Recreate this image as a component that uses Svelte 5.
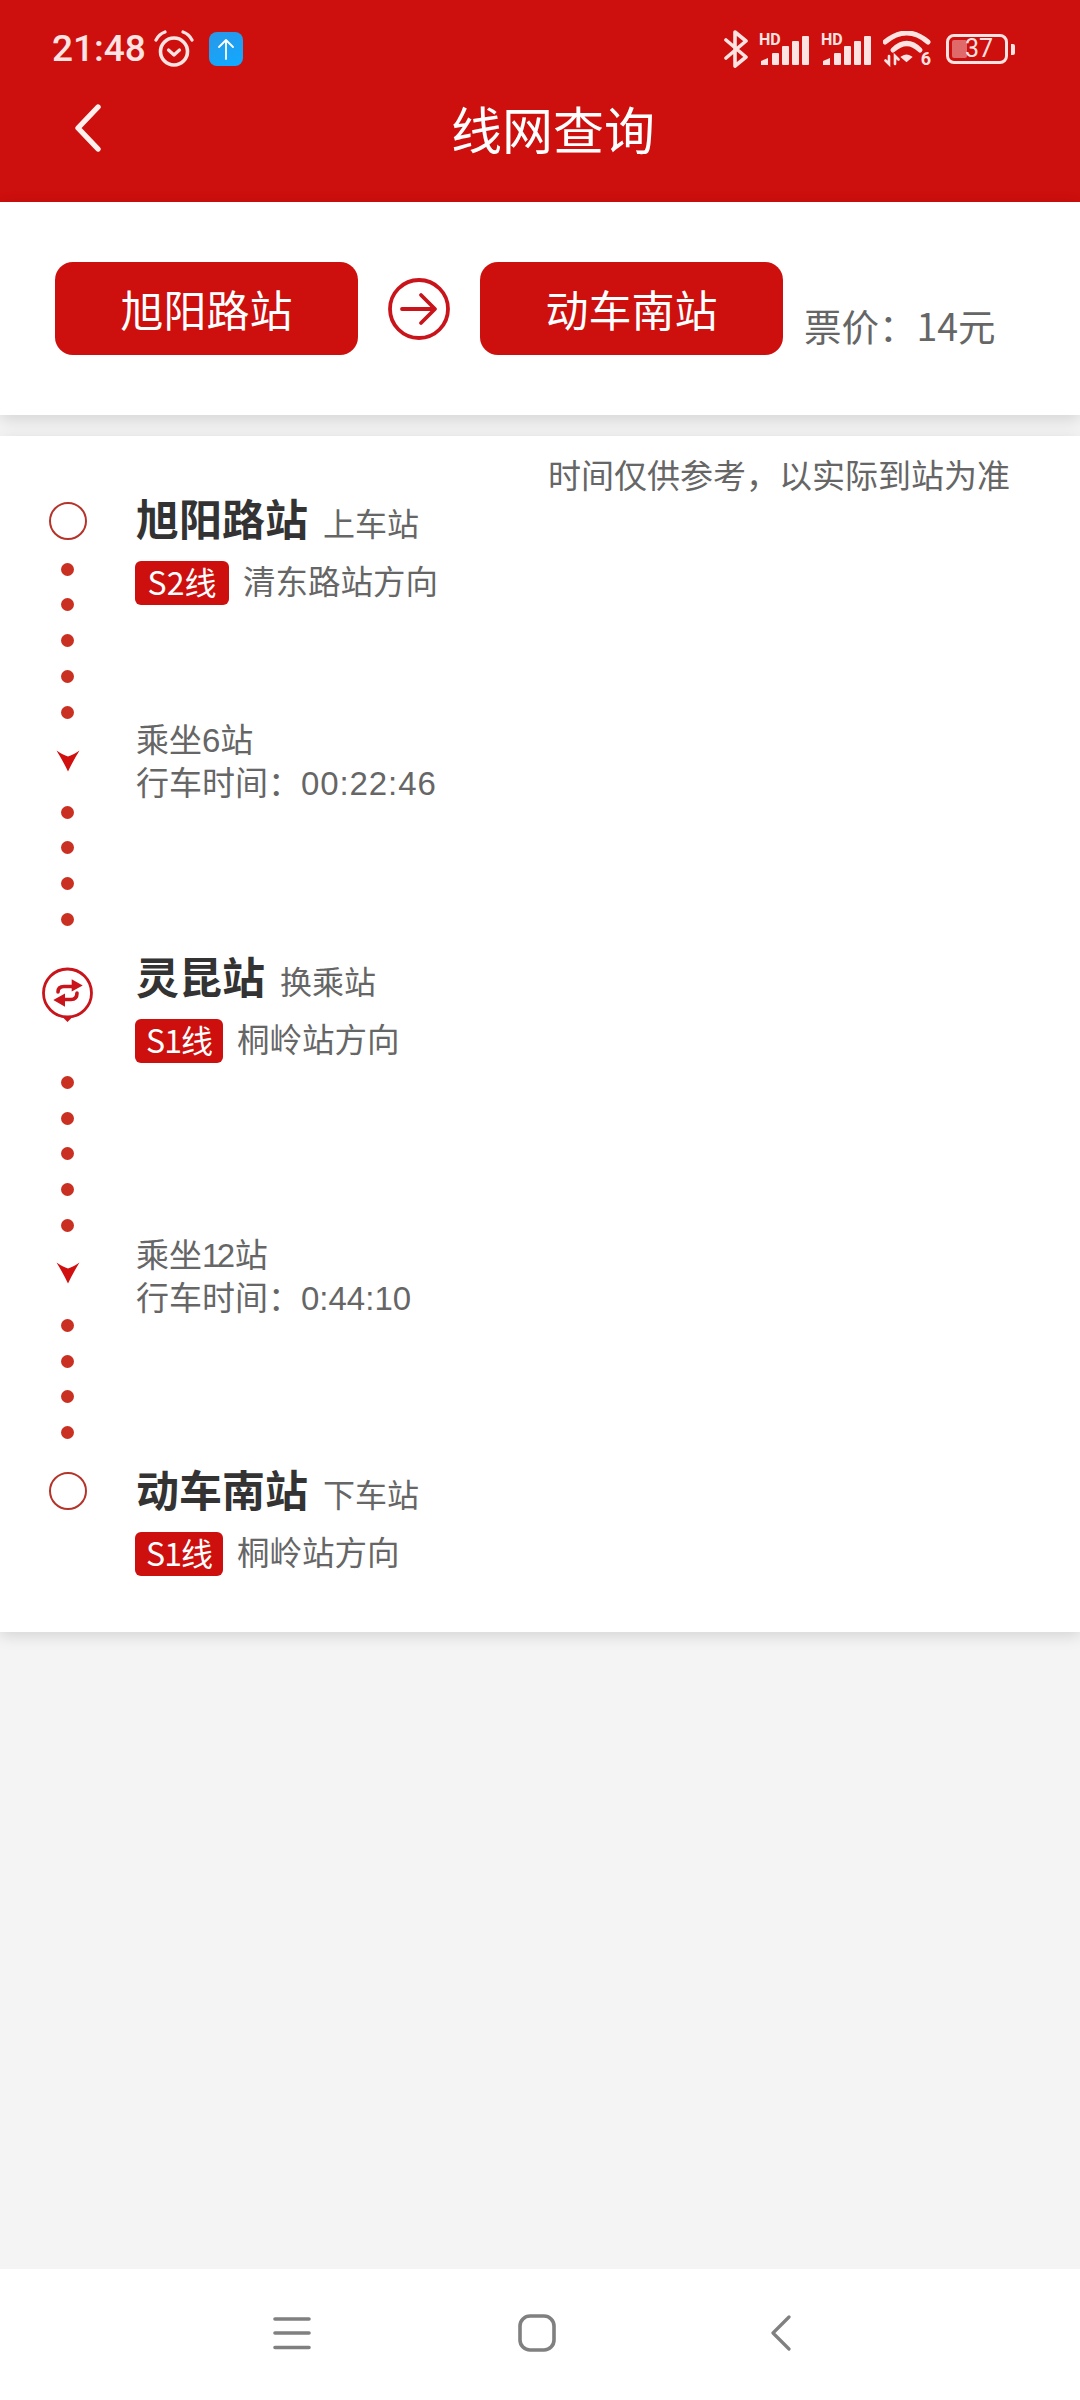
<script>
	const dots = (n) => Array.from({ length: n })
</script>

{#snippet dotGroup(n, cls)}
	<div class="dots {cls}">
		{#each dots(n) as _}
			<span class="dot"></span>
		{/each}
	</div>
{/snippet}

{#snippet chevron(cls)}
	<svg class="chev {cls}" width="24" height="22" viewBox="0 0 24 22">
		<path d="M0.5 0.5 Q7 5 12 6.5 Q17 5 23.5 0.5 Q17 11 12 21.5 Q7 11 0.5 0.5 Z" fill="#d0100f" />
	</svg>
{/snippet}

{#snippet ring(cls)}
	<span class="ring {cls}"></span>
{/snippet}

<div class="page">
	<header class="top">
		<div class="status">
			<div class="status-left">
				<span class="time">21:48</span>
				<svg class="alarm" width="40" height="38" viewBox="0 0 40 38" fill="none" stroke="#fde3e1" stroke-linecap="round" stroke-linejoin="round">
					<circle cx="20" cy="21.5" r="13.5" stroke-width="3.6" />
					<path d="M14.5 20 L20 25 L25.5 20" stroke-width="3.2" />
					<path d="M2 10 Q5 4 11 2" stroke-width="3.2" />
					<path d="M38 10 Q35 4 29 2" stroke-width="3.2" />
				</svg>
				<span class="upload">
					<svg width="20" height="24" viewBox="0 0 20 24" fill="none" stroke="#fff" stroke-width="1.8" stroke-linecap="round" stroke-linejoin="round">
						<path d="M10 22 V3 M3 10 L10 3 L17 10" />
					</svg>
				</span>
			</div>
			<div class="status-right">
				<svg class="bt" width="24" height="38" viewBox="0 0 24 38" fill="none" stroke="#fde3e1" stroke-width="3.6" stroke-linecap="round" stroke-linejoin="round">
					<path d="M2 10 L22 27 L11 36 V2 L22 11 L2 28" />
				</svg>
				{#each [0, 1] as i}
					<span class="signal">
						<span class="hd">HD</span>
						<svg width="50" height="29" viewBox="0 0 50 29" fill="#fde3e1">
							<path d="M2 29 V25 L9 22 V29 Z" />
							<rect x="13" y="17" width="7" height="12" rx="1" />
							<rect x="23" y="10" width="7" height="19" rx="1" />
							<rect x="33" y="5" width="7" height="24" rx="1" />
							<rect x="43" y="0" width="7" height="29" rx="1" />
						</svg>
					</span>
				{/each}
				<span class="wifi">
					<svg width="48" height="36" viewBox="0 0 48 36" fill="none" stroke="#fde3e1" stroke-linecap="round">
						<path d="M2 11 Q24 -7 45 11" stroke-width="5" />
						<path d="M10 19 Q24 6 37 19" stroke-width="5" />
						<path d="M19 26 Q23.5 23 28 26 L23.5 30 Z" fill="#fde3e1" stroke-width="2" />
						<path d="M6 25 V33 L2.5 29.5 M12 33 V25 L15.5 28.5" stroke-width="2.6" />
					</svg>
					<span class="wifi-six">6</span>
				</span>
				<span class="battery">
					<span class="battery-body">
						<span class="battery-fill"></span>
						<span class="battery-num">37</span>
					</span>
					<span class="battery-nub"></span>
				</span>
			</div>
		</div>
		<div class="titlebar">
			<svg class="back" width="26" height="48" viewBox="0 0 26 48" fill="none" stroke="#fff0ee" stroke-width="5.4" stroke-linecap="round" stroke-linejoin="round">
				<path d="M23 3 L3 24 L23 45" />
			</svg>
			<h1>线网查询</h1>
		</div>
	</header>

	<section class="route">
		<button class="station-btn">旭阳路站</button>
		<svg class="go" width="62" height="62" viewBox="0 0 62 62" fill="none" stroke="#c8141a" stroke-linecap="round" stroke-linejoin="round">
			<circle cx="31" cy="31" r="29" stroke-width="3.8" />
			<path d="M14 31 H46 M33 17 L47 31 L33 45" stroke-width="3.8" />
		</svg>
		<button class="station-btn">动车南站</button>
		<span class="fare">票价：14元</span>
	</section>

	<section class="list">
		<p class="note">时间仅供参考，以实际到站为准</p>
		<div class="timeline">
			<div class="rail">
				{@render ring('r-a')}
				{@render dotGroup(5, 'd-a')}
				{@render chevron('c-a')}
				{@render dotGroup(4, 'd-b')}
				<svg class="transfer" width="52" height="55" viewBox="0 0 52 55" fill="none" stroke-linecap="round">
					<circle cx="25.5" cy="26" r="24" stroke="#c8141a" stroke-width="2.8" />
					<path d="M20.5 50 H30.5 L25.5 55 Z" fill="#c8141a" />
					<path d="M16 25 Q16 19.5 22 19.5 H31" stroke="#c8141a" stroke-width="3.6" />
					<path d="M29.7 12.3 L40.7 18.5 L29.7 24.5 Z" fill="#c8141a" />
					<path d="M35 26 Q35 32.5 29 32.5 H21" stroke="#c8141a" stroke-width="3.6" />
					<path d="M23 26.5 L11.3 33 L23 39.7 Z" fill="#c8141a" />
				</svg>
				{@render dotGroup(5, 'd-c')}
				{@render chevron('c-b')}
				{@render dotGroup(4, 'd-d')}
				{@render ring('r-b')}
			</div>
			<div class="stops">
				<div class="stop">
					<div class="stop-name"><strong>旭阳路站</strong><span>上车站</span></div>
					<div class="stop-line"><em class="s2">S2线</em><span>清东路站方向</span></div>
				</div>
				<div class="ride ride-a">
					<p>乘坐6站</p>
					<p>行车时间：<span>00:22:46</span></p>
				</div>
				<div class="stop stop-b">
					<div class="stop-name"><strong>灵昆站</strong><span>换乘站</span></div>
					<div class="stop-line"><em class="s1">S1线</em><span>桐岭站方向</span></div>
				</div>
				<div class="ride ride-b">
					<p>乘坐<span class="count">12</span>站</p>
					<p>行车时间：<span>0:44:10</span></p>
				</div>
				<div class="stop stop-c">
					<div class="stop-name"><strong>动车南站</strong><span>下车站</span></div>
					<div class="stop-line"><em class="s1">S1线</em><span>桐岭站方向</span></div>
				</div>
			</div>
		</div>
	</section>

	<div class="spacer"></div>

	<nav class="navbar">
		<svg width="38" height="34" viewBox="0 0 38 34" stroke="#808080" stroke-width="3.6" stroke-linecap="round">
			<path d="M2 3 H36 M2 17 H36 M2 31.5 H36" />
		</svg>
		<svg width="38" height="38" viewBox="0 0 38 38" fill="none" stroke="#808080" stroke-width="3.6">
			<rect x="2" y="2" width="34" height="34" rx="10" />
		</svg>
		<svg class="nav-back" width="20" height="36" viewBox="0 0 20 36" fill="none" stroke="#808080" stroke-width="3.2" stroke-linecap="round" stroke-linejoin="round">
			<path d="M18 2 L2 18 L18 34" />
		</svg>
	</nav>
</div>

<style>
	:global(body) {
		background: #f4f4f4;
	}
	.page {
		height: 2400px;
		display: flex;
		flex-direction: column;
		font-family: "Noto Sans CJK SC", "Noto Sans", sans-serif;
		color: #666;
	}
	.top {
		height: 202px;
		box-sizing: border-box;
		background: #cd0f0d;
		color: #fff;
	}
	.status {
		display: flex;
		justify-content: space-between;
		align-items: center;
		height: 78px;
		padding: 20px 65px 0 52px;
		box-sizing: border-box;
	}
	.status-left, .status-right {
		display: flex;
		align-items: center;
	}
	.time {
		font-family: Roboto, sans-serif;
		font-weight: 500;
		font-size: 37px;
		color: #fde3e1;
		line-height: 44px;
	}
	.alarm {
		margin-left: 8px;
	}
	.upload {
		display: flex;
		align-items: center;
		justify-content: center;
		width: 34px;
		height: 34px;
		margin-left: 15px;
		border-radius: 8px;
		background: linear-gradient(160deg, #2a97e8, #10aaff);
	}
	.status-right {
		gap: 12px;
	}
	.bt {
		margin-right: -1px;
	}
	.signal {
		position: relative;
		display: flex;
		width: 50px;
		height: 29px;
		margin-top: 2px;
	}
	.hd {
		position: absolute;
		left: 0;
		top: -4px;
		font-family: Roboto, sans-serif;
		font-weight: 700;
		font-size: 16px;
		line-height: 16px;
		color: #fde3e1;
	}
	.wifi {
		position: relative;
		display: flex;
		width: 48px;
		height: 36px;
	}
	.wifi-six {
		position: absolute;
		right: 0;
		bottom: 0;
		font-family: Roboto, sans-serif;
		font-weight: 700;
		font-size: 18px;
		line-height: 16px;
		color: #fde3e1;
	}
	.battery {
		display: flex;
		align-items: center;
		gap: 3px;
		margin-left: 3px;
	}
	.battery-body {
		position: relative;
		display: block;
		width: 62px;
		height: 30px;
		box-sizing: border-box;
		border: 3px solid #fde3e1;
		border-radius: 8px;
	}
	.battery-fill {
		position: absolute;
		left: 3px;
		top: 3px;
		bottom: 3px;
		width: 15px;
		border-radius: 2px;
		background: #e06a6a;
	}
	.battery-num {
		position: absolute;
		left: 16px;
		top: -2px;
		font-family: Roboto, sans-serif;
		font-size: 25px;
		line-height: 28px;
		color: #fde3e1;
	}
	.battery-nub {
		width: 4px;
		height: 11px;
		border-radius: 0 2px 2px 0;
		background: #fde3e1;
	}
	.titlebar {
		display: grid;
		grid-template-columns: 1fr auto 1fr;
		align-items: center;
		height: 100px;
		padding-left: 26px;
	}
	.back {
		margin-left: 49px;
	}
	h1 {
		margin: 0;
		font-weight: 400;
		font-size: 51px;
		line-height: 60px;
	}
	.route {
		position: relative;
		z-index: 0;
		display: flex;
		align-items: center;
		height: 213px;
		padding: 0 0 0 55px;
		box-sizing: border-box;
		background: #fff;
		box-shadow: 0 5px 16px rgba(0, 0, 0, 0.13);
	}
	.station-btn {
		width: 303px;
		height: 93px;
		border: 0;
		border-radius: 18px;
		background: #cd0f0d;
		color: #fff;
		font: inherit;
		font-size: 43px;
		line-height: 60px;
		padding: 0 0 2px;
	}
	.go {
		margin: 0 30px;
	}
	.fare {
		margin: 32px 0 0 21px;
		font-size: 37.5px;
		line-height: 50px;
		color: #666;
		white-space: nowrap;
	}
	.list {
		position: relative;
		z-index: 1;
		height: 1196px;
		margin-top: 21px;
		background: #fff;
		box-shadow: 0 4px 14px rgba(0, 0, 0, 0.13);
	}
	.note {
		margin: 0;
		padding: 18px 70px 0 0;
		font-size: 33px;
		line-height: 40px;
		text-align: right;
		color: #666;
	}
	.timeline {
		display: flex;
		margin-top: -5px;
	}
	.rail {
		display: flex;
		flex-direction: column;
		align-items: center;
		width: 135px;
		box-sizing: border-box;
		padding-top: 13px;
	}
	.rail > :global(*) {
		flex: none;
	}
	.ring {
		display: block;
		width: 38px;
		height: 38px;
		box-sizing: border-box;
		border: 2px solid #b5342a;
		border-radius: 50%;
	}
	.dots {
		display: flex;
		flex-direction: column;
		align-items: center;
		gap: 22.75px;
	}
	.dot {
		display: block;
		width: 13px;
		height: 13px;
		border-radius: 50%;
		background: #c93022;
	}
	.chev {
		display: block;
	}
	.d-a { margin-top: 22.5px; }
	.c-a { margin-top: 31.5px; }
	.d-b { margin-top: 33.5px; }
	.transfer { margin-top: 41.5px; }
	.d-c { margin-top: 53.5px; }
	.c-b { margin-top: 30.5px; }
	.d-d { margin-top: 34.5px; }
	.r-b { margin-top: 32.5px; }
	.stop-name {
		display: flex;
		align-items: baseline;
		height: 56px;
		line-height: 56px;
	}
	.stop-name strong {
		font-size: 43px;
		font-weight: 700;
		color: #333;
		padding-left: 1px;
	}
	.stop-name span {
		margin-left: 15px;
		font-size: 32px;
		color: #666;
	}
	.stop-line {
		display: flex;
		align-items: center;
		gap: 14px;
		height: 44px;
		margin-top: 16px;
		font-size: 32.5px;
	}
	.stop-line span {
		margin-bottom: 8px;
	}
	.stop-line em {
		height: 44px;
		line-height: 40px;
		text-align: center;
		border-radius: 6px;
		background: #cd0f0d;
		color: #fff;
		font-style: normal;
		font-size: 32px;
	}
	.stop-line em.s2 {
		width: 94px;
	}
	.stop-line em.s1 {
		width: 88px;
		letter-spacing: -1px;
	}
	.ride p {
		margin: 0;
		padding-left: 1px;
		font-family: "Liberation Sans", "Noto Sans CJK SC", sans-serif;
		font-size: 33px;
		line-height: 43px;
		color: #666;
	}
	.ride-a { margin-top: 113.5px; }
	.ride-a span { letter-spacing: 0.9px; }
	.stop-b { margin-top: 142.5px; }
	.ride-b { margin-top: 171px; }
	.ride-b .count { letter-spacing: -3.5px; padding-right: 3px; }
	.stop-c { margin-top: 140px; }
	.spacer {
		flex: 1;
	}
	.navbar {
		display: flex;
		align-items: center;
		height: 131px;
		padding: 0 0 4px 273px;
		box-sizing: border-box;
		gap: 207px;
		background: #fff;
	}
	.nav-back {
		margin-left: 8px;
	}
</style>
